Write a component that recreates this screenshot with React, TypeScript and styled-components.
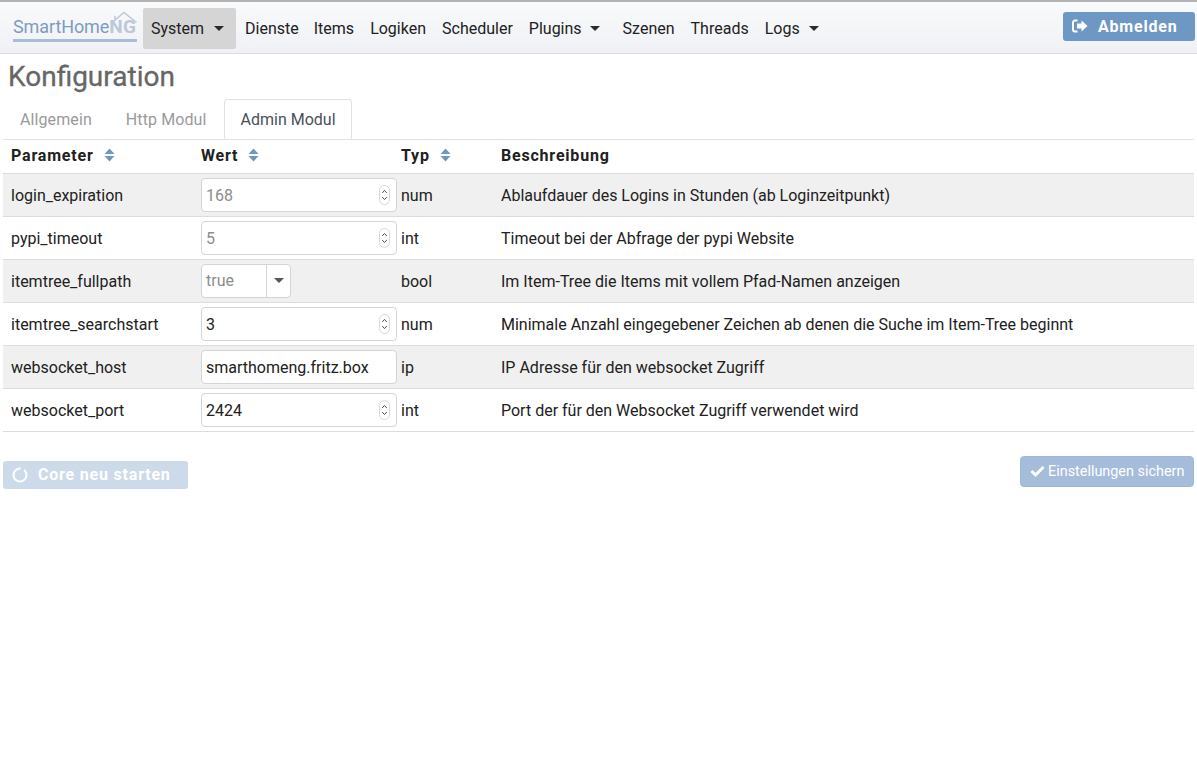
import styled, { createGlobalStyle } from 'styled-components'

const GlobalStyle = createGlobalStyle`
  html, body {
    margin: 0;
    padding: 0;
    background: #fff;
    font-family: Roboto, "Liberation Sans", sans-serif;
    color: #212529;
  }
`

const Navbar = styled.nav`
  height: 51px;
  border-top: 2px solid #b3b3b3;
  border-bottom: 1px solid #dcdcdc;
  background: linear-gradient(#f9fafb, #eff1f5);
  display: flex;
  align-items: center;
  padding: 0 2px 0 13px;
`

const Logo = styled.div`
  position: relative;
  width: 124px;
  height: 30px;
  margin-right: 6px;
  margin-top: -2px;
  border-bottom: 3px solid #a9bdd8;
  box-sizing: border-box;
  flex: none;
`

const LogoText = styled.span`
  position: absolute;
  left: 0;
  bottom: 1px;
  font-size: 18px;
  letter-spacing: -0.1px;
  color: #7e9cc2;
  white-space: nowrap;
`

const LogoAccent = styled.span`
  color: #bcc8d8;
  font-weight: 700;
  letter-spacing: 0.3px;
  font-size: 19px;
`

const LogoRoof = styled.svg`
  position: absolute;
  right: 0;
  top: -2px;
`

const NavItem = styled.a<{ $active?: boolean }>`
  height: 41px;
  margin-top: 2px;
  margin-right: ${p => (p.$active ? 1 : 0)}px;
  display: flex;
  align-items: center;
  padding: 0 8px;
  font-size: 16px;
  color: #212121;
  border-radius: 2px;
  white-space: nowrap;
  background: ${p => (p.$active ? '#d5d5d5' : 'transparent')};
`

const NavItemTight = styled(NavItem)`
  padding-right: 7px;
`

const Caret = styled.span<{ $gap: number; $after: number }>`
  width: 0;
  height: 0;
  margin-left: ${p => p.$gap}px;
  margin-right: ${p => p.$after}px;
  border-left: 5px solid transparent;
  border-right: 5px solid transparent;
  border-top: 5px solid #2b2b2b;
`

const LogoutButton = styled.button`
  margin-left: auto;
  width: 132px;
  height: 29px;
  margin-top: -3px;
  border: none;
  border-radius: 3px;
  background: #6f97c4;
  color: #fff;
  font: 700 16px Roboto, sans-serif;
  letter-spacing: 0.8px;
  display: flex;
  align-items: center;
  padding: 0 0 0 9px;
  gap: 10px;
`

const Title = styled.h1`
  margin: 0;
  padding: 6px 0 0 8px;
  height: 39px;
  font-size: 28px;
  line-height: 33px;
  font-weight: 400;
  color: #666;
  -webkit-text-stroke: 0.3px #666;
`

const Tabs = styled.ul`
  list-style: none;
  margin: 0 3px;
  padding: 0;
  height: 40px;
  display: flex;
  border-bottom: 1px solid #dee2e6;
`

const Tab = styled.li<{ $active?: boolean }>`
  height: 40px;
  box-sizing: border-box;
  padding: 0 ${p => (p.$active ? 15 : 16)}px 0 16px;
  display: flex;
  align-items: center;
  font-size: 16px;
  letter-spacing: ${p => (p.$active ? 0 : 0.1)}px;
  border: 1px solid ${p => (p.$active ? '#dee2e6' : 'transparent')};
  border-bottom-color: ${p => (p.$active ? '#fff' : 'transparent')};
  border-radius: 4px 4px 0 0;
  color: ${p => (p.$active ? '#495057' : '#9a9a9a')};
  background: ${p => (p.$active ? '#fff' : 'transparent')};
`

const Table = styled.table`
  width: 1191px;
  margin: 0 3px;
  border-collapse: collapse;
  table-layout: fixed;
  font-size: 16px;
`

const HeadCell = styled.th<{ $width?: number }>`
  width: ${p => (p.$width ? `${p.$width}px` : 'auto')};
  height: 33px;
  padding: 0 8px 2px;
  box-sizing: border-box;
  text-align: left;
  font-weight: 700;
  letter-spacing: 0.8px;
  color: #212121;
  border-bottom: 1px solid #dcdcdc;
`

const SortIcon = styled.svg`
  margin-left: 10px;
  vertical-align: -1px;
`

const Row = styled.tr<{ $shaded?: boolean }>`
  background: ${p => (p.$shaded ? '#f0f0f0' : '#fff')};
`

const Cell = styled.td`
  height: 43px;
  padding: 2px 8px 0;
  box-sizing: border-box;
  color: #212121;
  white-space: nowrap;
  border-bottom: 1px solid #dcdcdc;
`

const ValueCell = styled(Cell)`
  padding: 0 0 0 8px;
  overflow: visible;
`

const InputBox = styled.div`
  position: relative;
  width: 196px;
  height: 34px;
`

const Input = styled.input<{ $muted?: boolean }>`
  width: 100%;
  height: 100%;
  box-sizing: border-box;
  padding: 2px 4px 0;
  border: 1px solid #d4d4d4;
  border-radius: 4px;
  background: #fff;
  font: 16px Roboto, sans-serif;
  color: ${p => (p.$muted ? '#8c8c8c' : '#212121')};
  outline: none;
`

const Spinner = styled.svg`
  position: absolute;
  right: 7px;
  top: 7px;
`

const SelectBox = styled.div`
  width: 90px;
  height: 34px;
  box-sizing: border-box;
  display: flex;
  border: 1px solid #d4d4d4;
  border-radius: 4px;
  background: #fff;
`

const SelectValue = styled.span`
  flex: 1;
  padding-left: 4px;
  line-height: 32px;
  color: #8c8c8c;
`

const SelectButton = styled.span`
  width: 23px;
  border-left: 1px solid #d4d4d4;
  display: flex;
  align-items: center;
  justify-content: center;
`

const SelectCaret = styled.span`
  width: 0;
  height: 0;
  border-left: 5px solid transparent;
  border-right: 5px solid transparent;
  border-top: 5px solid #555;
`

const Actions = styled.div`
  display: flex;
  justify-content: space-between;
  align-items: flex-start;
  margin: 24px 3px 0;
`

const RestartButton = styled.button`
  width: 185px;
  height: 28px;
  margin-top: 5px;
  border: none;
  border-radius: 3px;
  background: #cddaea;
  color: #fff;
  font: 700 16px Roboto, sans-serif;
  letter-spacing: 0.8px;
  display: flex;
  align-items: center;
  gap: 10px;
  padding: 0 0 0 9px;
`

const SaveButton = styled.button`
  width: 174px;
  height: 31px;
  border: 1px solid #9db7d8;
  border-radius: 4px;
  background: #a5bcda;
  color: #fff;
  font: 14.4px Roboto, sans-serif;
  display: flex;
  align-items: center;
  gap: 3px;
  padding: 0 0 0 9px;
  white-space: nowrap;
`

type Param = {
  name: string
  value: string
  type: string
  description: string
  kind: 'number' | 'text' | 'select'
  muted?: boolean
}

const params: Param[] = [
  { name: 'login_expiration', value: '168', type: 'num', description: 'Ablaufdauer des Logins in Stunden (ab Loginzeitpunkt)', kind: 'number', muted: true },
  { name: 'pypi_timeout', value: '5', type: 'int', description: 'Timeout bei der Abfrage der pypi Website', kind: 'number', muted: true },
  { name: 'itemtree_fullpath', value: 'true', type: 'bool', description: 'Im Item-Tree die Items mit vollem Pfad-Namen anzeigen', kind: 'select', muted: true },
  { name: 'itemtree_searchstart', value: '3', type: 'num', description: 'Minimale Anzahl eingegebener Zeichen ab denen die Suche im Item-Tree beginnt', kind: 'number' },
  { name: 'websocket_host', value: 'smarthomeng.fritz.box', type: 'ip', description: 'IP Adresse für den websocket Zugriff', kind: 'text' },
  { name: 'websocket_port', value: '2424', type: 'int', description: 'Port der für den Websocket Zugriff verwendet wird', kind: 'number' }
]

function Sort() {
  return (
    <SortIcon width="11" height="14" viewBox="0 0 11 14">
      <path d="M5.5 0.5 L10.5 6 H0.5 Z M0.5 8 H10.5 L5.5 13.5 Z" fill="#6f97c4" />
    </SortIcon>
  )
}

function NumberSpinner() {
  return (
    <Spinner width="11" height="20" viewBox="0 0 11 20">
      <rect x="0.5" y="0.5" width="10" height="19" rx="5" fill="#fff" stroke="#d8d8d8" />
      <path d="M3.2 8 L5.5 5.4 L7.8 8 M3.2 12 L5.5 14.6 L7.8 12" fill="none" stroke="#555" strokeWidth="1" />
    </Spinner>
  )
}

function ValueField({ param }: { param: Param }) {
  if (param.kind === 'select') {
    return (
      <SelectBox>
        <SelectValue>{param.value}</SelectValue>
        <SelectButton>
          <SelectCaret />
        </SelectButton>
      </SelectBox>
    )
  }
  return (
    <InputBox>
      <Input readOnly $muted={param.muted} value={param.value} />
      {param.kind === 'number' && <NumberSpinner />}
    </InputBox>
  )
}

export default function App() {
  return (
    <>
      <GlobalStyle />
      <Navbar>
        <Logo>
          <LogoRoof width="40" height="22" viewBox="0 0 40 22">
            <path d="M14 13.5 L27 2.5 L39.5 12.5 M18 10 V6" fill="none" stroke="#bcc8d8" strokeWidth="1.5" />
          </LogoRoof>
          <LogoText>
            SmartHome<LogoAccent>NG</LogoAccent>
          </LogoText>
        </Logo>
        <NavItem $active>
          System<Caret $gap={10} $after={4} />
        </NavItem>
        <NavItemTight>Dienste</NavItemTight>
        <NavItem>Items</NavItem>
        <NavItem>Logiken</NavItem>
        <NavItem>Scheduler</NavItem>
        <NavItem>
          Plugins<Caret $gap={8} $after={7} />
        </NavItem>
        <NavItem>Szenen</NavItem>
        <NavItem>Threads</NavItem>
        <NavItem>
          Logs<Caret $gap={9} $after={4} />
        </NavItem>
        <LogoutButton>
          <svg width="16" height="14" viewBox="0 0 16 14">
            <path d="M5.5 1.5 H3 A2 2 0 0 0 1 3.5 V10.5 A2 2 0 0 0 3 12.5 H5.5" fill="none" stroke="#fff" strokeWidth="2" />
            <path d="M9.5 1.5 L15.5 7 L9.5 12.5 V9.5 H5 V4.5 H9.5 Z" fill="#fff" />
          </svg>
          Abmelden
        </LogoutButton>
      </Navbar>
      <Title>Konfiguration</Title>
      <Tabs>
        <Tab>Allgemein</Tab>
        <Tab>Http Modul</Tab>
        <Tab $active>Admin Modul</Tab>
      </Tabs>
      <Table>
        <thead>
          <tr>
            <HeadCell $width={190}>
              Parameter
              <Sort />
            </HeadCell>
            <HeadCell $width={200}>
              Wert
              <Sort />
            </HeadCell>
            <HeadCell $width={100}>
              Typ
              <Sort />
            </HeadCell>
            <HeadCell>Beschreibung</HeadCell>
          </tr>
        </thead>
        <tbody>
          {params.map((param, index) => (
            <Row key={param.name} $shaded={index % 2 === 0}>
              <Cell>{param.name}</Cell>
              <ValueCell>
                <ValueField param={param} />
              </ValueCell>
              <Cell>{param.type}</Cell>
              <Cell>{param.description}</Cell>
            </Row>
          ))}
        </tbody>
      </Table>
      <Actions>
        <RestartButton>
          <svg width="16" height="16" viewBox="0 0 16 16">
            <circle cx="8" cy="8" r="6.5" fill="none" stroke="#fff" strokeWidth="2" strokeDasharray="36 5" transform="rotate(-50 8 8)" />
          </svg>
          Core neu starten
        </RestartButton>
        <SaveButton>
          <svg width="15" height="12" viewBox="0 0 15 12">
            <path d="M1.5 6 L5.5 10 L13.5 2" fill="none" stroke="#fff" strokeWidth="3" />
          </svg>
          Einstellungen sichern
        </SaveButton>
      </Actions>
    </>
  )
}
